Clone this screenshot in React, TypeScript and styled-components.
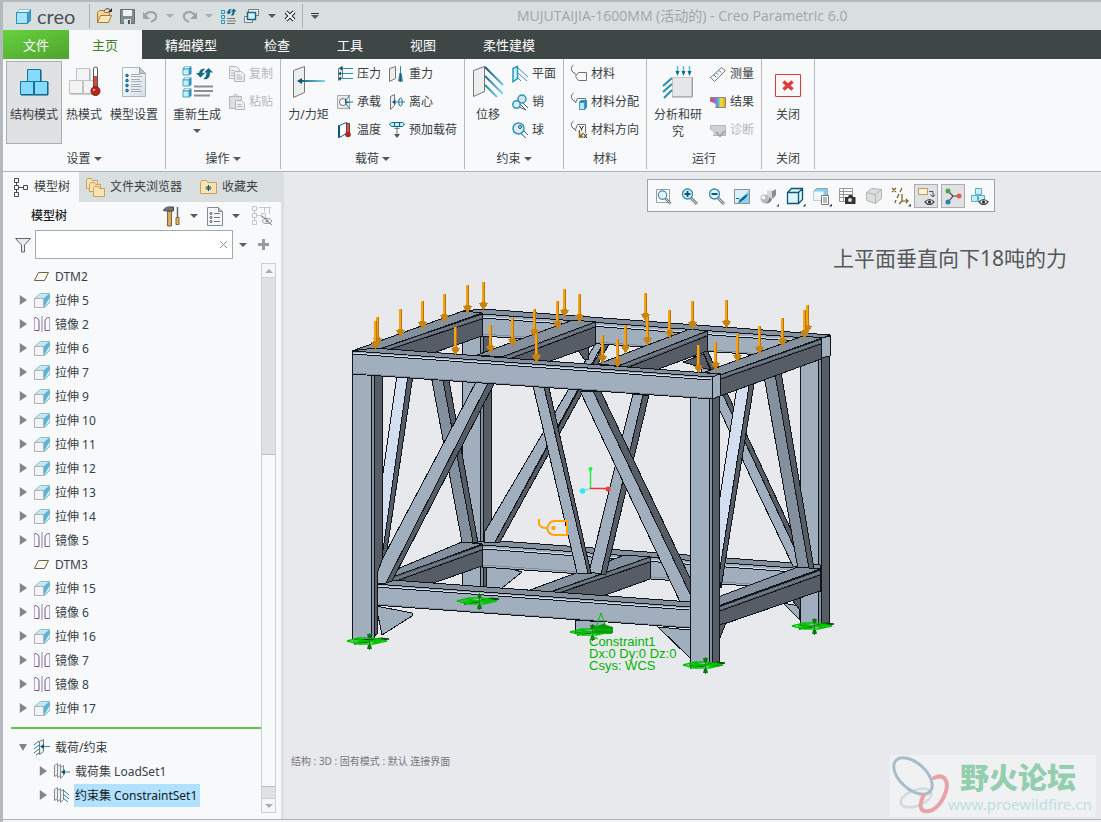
import React, { ReactNode } from 'react';
import styled, { createGlobalStyle, css } from 'styled-components';

const GlobalStyle = createGlobalStyle`
  *, *::before, *::after { box-sizing: border-box; }
  body {
    margin: 0;
    background: #e8e9ed;
    color: #3a3f44;
    font: 12px/16px 'Noto Sans', 'Noto Sans CJK SC', sans-serif;
  }
  button, input { font: inherit; color: inherit; }
  button { border: 0; padding: 0; background: none; cursor: pointer; }
  ul { list-style: none; margin: 0; padding: 0; }
`;

/* ---------- icon helpers ---------- */

const Svg = styled.svg`
  display: block;
  flex: none;
  overflow: visible;
`;

interface IconProps { w: number; h?: number; children: ReactNode }
const Icon = ({ w, h = w, children }: IconProps) => (
  <Svg width={w} height={h} viewBox={`0 0 ${w} ${h}`} fill="none" aria-hidden="true">{children}</Svg>
);

const Caret = styled.span<{ $pale?: boolean }>`
  flex: none;
  width: 0;
  height: 0;
  border: 4px solid transparent;
  border-top-color: ${(p) => (p.$pale ? '#a9afb1' : '#555a5e')};
  border-bottom-width: 0;
`;

const SmallCube = ({ x, y, s = 6 }: { x: number; y: number; s?: number }) => (
  <g strokeWidth="1">
    <path d={`M${x - .5} ${y + 1.5}l2 -2h${s + 1}v${s + 1}l-2 2z`} fill="#2b8fb8" />
    <path d={`M${x + .5} ${y + 1.5}l1.500 -1.500h${s - 1}l-1.500 1.500z`} fill="#e4f9ff" />
    <path d={`M${x} ${y + 2}h${s}v${s}h-${s}z`} fill="#c4effc" stroke="#4ba6c8" />
  </g>
);

const BlockStack = ({ fill, line, side }: { fill: string; line: string; side: string }) => (
  <g stroke={line} fill={fill}>
    <path d="M8.500 2.500h13v12h-13z" /><path d="M1.500 14.500h13v13h-13z" /><path d="M15.500 14.500h13v13h-13z" />
    <path d="M2 28h27v-13M22 3v11" stroke={side} fill="none" />
  </g>
);

const Sheet = ({ x = 0, y = 0 }: { x?: number; y?: number }) => (
  <g transform={`translate(${x} ${y})`}>
    <path d="M.5 2.500l4 -2v11l-4 3z" fill="#eceeef" stroke="#777" />
  </g>
);

const IcStructure = () => <Icon w={30}><BlockStack fill="#86dbfb" line="#12769c" side="#0b5a7a" /></Icon>;
const IcThermal = () => (
  <Icon w={32}>
    <BlockStack fill="#f3f3f3" line="#c2c2c2" side="#aaa" />
    <path d="M25.500 3a2 2 0 0 1 4 0v18h-4z" fill="#fff" stroke="#555" />
    <path d="M26 10h3v12h-3z" fill="#d84a3c" />
    <circle cx="27.500" cy="25" r="4.500" fill="#b3261c" stroke="#7d1c15" /><circle cx="26" cy="24" r="1.300" fill="#f08a80" />
  </Icon>
);
const IcModelSetup = () => (
  <Icon w={26} h={32}>
    <defs><linearGradient id="pg" x1="0" y1="0" x2="1" y2="1"><stop offset="0" stopColor="#fff" /><stop offset="1" stopColor="#d3dfe6" /></linearGradient></defs>
    <path d="M1.500 1.500h17l6 6v23h-23z" fill="url(#pg)" stroke="#adb6ba" /><path d="M18.500 1.500v6h6z" fill="#b9c8cf" stroke="#93a3aa" />
    {[9, 14, 19, 24].map((y) => <g key={y}><circle cx="6" cy={y + .5} r="1.300" fill="#2a9bc4" stroke="#0d5e80" /><path d={`M10 ${y - .5}h9M10 ${y + 1.500}h11`} stroke="#a9aeb1" /></g>)}
  </Icon>
);
const Swirl = ({ x, y, k = 1 }: { x: number; y: number; k?: number }) => (
  <g transform={`translate(${x} ${y}) scale(${k})`} fill="#14688a">
    <path d="M0 6l4.500 4.500l4.500 -4.500h-2.500c0 -2 1 -3 3 -4c-4 -1 -6 1 -6.500 4z" />
    <path d="M17 5.500l-4.500 -4.500l-4.500 4.500h2.500c0 3 -1 5 -3 6.500c4 1 6.500 -1 6.500 -6.500z" />
  </g>
);
const IcRegen = () => (
  <Icon w={32}>
    <SmallCube x={2} y={1} /><SmallCube x={2} y={12} /><SmallCube x={2} y={23} />
    <Swirl x={15} y={1} />
    <path d="M13 20.500h19M13 25h19M13 29.500h16" stroke="#8a8f92" strokeWidth="2" />
  </Icon>
);
const IcCopy = () => (
  <Icon w={16}><g stroke="#b4b8ba" fill="#eceeef">
    <path d="M.5 .5h7l3 3v9h-10z" /><path d="M5.500 5.500h7l3 3v7h-10z" /><path d="M2 4.500h3M2 7h3M2 9.500h3M7.500 9h4M7.500 11h6M7.500 13h6" />
  </g></Icon>
);
const IcPaste = () => (
  <Icon w={16}><g stroke="#b4b8ba" fill="#eceeef">
    <path d="M.5 2.500h12v12h-12z" fill="#dcdfe0" /><path d="M4 2.500l1.500 -2h2l1.500 2z" /><path d="M6.500 6.500h6l3 3v6h-9z" /><path d="M8.500 10.500h4M8.500 12.500h5" />
  </g></Icon>
);
const IcForce = () => (
  <Icon w={34} h={32}>
    <defs><linearGradient id="fg"><stop offset="0" stopColor="#0b5878" /><stop offset="1" stopColor="#7fd6fa" /></linearGradient></defs>
    <path d="M1.500 4.500l11 -4v26l-11 5z" fill="#eceded" stroke="#777" />
    <path d="M7 14h26v2h-26z" fill="url(#fg)" /><path d="M5 15l5 -3v6z" fill="#0b5878" />
  </Icon>
);
const IcPressure = () => (
  <Icon w={16}><Sheet x={1} /><path d="M5 2.500h11M3 7.500h13M5 12.500h11" stroke="#2b8fb8" /><path d="M2 2.500l3 -2v4zM1 7.500l3 -2v4zM1 12.500l3 -2v4z" fill="#0b5878" /></Icon>
);
const IcGravity = () => (
  <Icon w={16}><path d="M.5 2.500l6 -2v12l-6 3z" fill="#eceded" stroke="#777" /><path d="M11 0h1v16h-1z" fill="#2b8fb8" /><path d="M10.500 7h2l1.500 8.500h-5z" fill="#0b5878" opacity=".8" /></Icon>
);
const IcBearing = () => (
  <Icon w={16}><path d="M.5 1.500h12v13h-12z" fill="#e9eaeb" stroke="#a5a9ab" /><circle cx="6" cy="8" r="3.500" fill="#fff" stroke="#6d7275" /><path d="M8 7l5 -6M8 8h8M8 9l5 6" stroke="#1c7ba0" /><path d="M8.500 5v3.500h3" stroke="#0b5878" /></Icon>
);
const IcCentrifugal = () => (
  <Icon w={16}><path d="M1.500 2.500l4 -2v11l-4 4z" fill="#eceded" stroke="#777" /><path d="M4 8h12" stroke="#2b8fb8" /><path d="M3 8l3.500 -2.500v5z" fill="#0b5878" /><ellipse cx="11.500" cy="8" rx="1.800" ry="4" stroke="#14688a" /></Icon>
);
const IcTemperature = () => (
  <Icon w={16}><path d="M2.500 3.500l7 -3v11l-7 4z" fill="#fff" stroke="#0b5878" /><path d="M1.500 3v13" stroke="#0b5878" /><path d="M9.500 1.500h3v9h-3z" fill="#e2574a" stroke="#6b3b38" /><circle cx="11" cy="12.500" r="2.800" fill="#b3261c" /></Icon>
);
const IcPreload = () => (
  <Icon w={16}><path d="M2.500 .5h11l2 1.500l-2 2.500h-11l-2 -2.500z" fill="#c4ecfa" stroke="#0b6a8e" /><path d="M5.500 .5v4M10.500 .5v4" stroke="#0b6a8e" /><path d="M5.500 6.500h5M8 5v8" stroke="#777" /><path d="M8 16l-3 -4h6z" fill="#555" /></Icon>
);
const IcDisplacement = () => (
  <Icon w={32} h={34}>
    <defs><linearGradient id="dg" x1="0" y1="0" x2="1" y2="1"><stop offset="0" stopColor="#0b5878" /><stop offset="1" stopColor="#8adcff" /></linearGradient></defs>
    <path d="M1.500 5.500l11 -4v25l-11 5z" fill="#eceded" stroke="#777" />
    <path d="M13 2l18 18M13 11l18 18M13 20l12 12" stroke="url(#dg)" strokeWidth="2" />
  </Icon>
);
const IcPlane = () => (
  <Icon w={16}><path d="M1 2.500l4.500 -2v12l-4.500 3z" fill="#d6f2fc" stroke="#2598c4" strokeWidth="1.500" /><path d="M6 2l10 9M6 7l9 8M6 12l3 3" stroke="#3f93b8" /></Icon>
);
const IcPin = () => (
  <Icon w={16}><path d="M7 13l7 3M11 9l5 5M8 10l6 6" stroke="#5a6468" /><circle cx="10" cy="5" r="4" fill="#d9e3e7" stroke="#2598c4" strokeWidth="1.500" /><circle cx="4.500" cy="10.500" r="3.700" fill="#e4eaec" stroke="#2598c4" strokeWidth="1.500" /></Icon>
);
const IcBall = () => (
  <Icon w={16}><path d="M8 11l6 5M11 8l5 5" stroke="#2b6f90" /><circle cx="6.500" cy="6.500" r="5.500" fill="#e4eaec" stroke="#2598c4" strokeWidth="1.500" /><circle cx="8" cy="5" r="1.500" stroke="#0b5878" /></Icon>
);
const Hook = <path d="M2.500 -1c-2.500 2 -2.500 4 -1.500 6c1 2 3 1.500 4 4" stroke="#555a5c" />;
const IcMaterial = () => (
  <Icon w={16}>{Hook}<path d="M4.500 10.500l3 -4h8v8h-8z" fill="#fafafa" stroke="#6d7275" /></Icon>
);
const IcAssign = () => (
  <Icon w={16}>{Hook}<path d="M4.500 8.500l2 -4h8v3" stroke="#6d7275" /><path d="M8 8l2 -2h6v7l-2 3h-6z" fill="#2b8fb8" /><path d="M8.500 8.500h5v7h-5z" fill="#b5e9fb" stroke="#3a9cc2" /></Icon>
);
const IcOrient = () => (
  <Icon w={16}>{Hook}<path d="M4.500 7.500l2 -5h8v9" stroke="#6d7275" /><path d="M8.500 4l2 3l2 -3M10.500 7v1.500" stroke="#222" /><path d="M8.500 8v7h4M8.500 15l4 -4" stroke="#8a6420" strokeWidth="1.500" /><path d="M13 12l3 4M16 12l-3 4" stroke="#222" /></Icon>
);
const IcAnalysis = () => (
  <Icon w={30} h={32}>
    <path d="M9.500 11.500h19v19h-19z" fill="#e4e6e7" stroke="#c5c8ca" /><path d="M9 31h20.500v-20" stroke="#9a9ea1" />
    <path d="M14.500 0v6M20.500 0v6M26.500 0v6" stroke="#5bb8de" strokeWidth="1.500" />
    <path d="M14.500 10l-2 -5h4zM20.500 10l-2 -5h4zM26.500 10l-2 -5h4z" fill="#0b6a8e" />
    <path d="M0 20l9 -8M0 26l9 -8M1 32l8 -8" stroke="#2b8fb8" strokeWidth="2" />
  </Icon>
);
const IcMeasure = () => (
  <Icon w={16}><path d="M.5 11.500l11 -10l4 3l-11 11z" fill="#f3f4f4" stroke="#777c7f" /><path d="M4 9l2 2M6.500 7l1.500 1.500M9 4.500l2 2" stroke="#1c7ba0" /></Icon>
);
const IcResults = () => (
  <Icon w={16}>
    <defs><linearGradient id="rg"><stop offset="0" stopColor="#ef4136" /><stop offset=".3" stopColor="#b455e8" /><stop offset=".5" stopColor="#39b4f0" /><stop offset=".7" stopColor="#f7e32b" /><stop offset="1" stopColor="#f59a23" /></linearGradient></defs>
    <path d="M.5 3.500h15v10h-10c2 -3 0 -5 -5 -6z" fill="url(#rg)" stroke="#888" />
  </Icon>
);
const IcDiagnose = () => (
  <Icon w={16}><path d="M.5 3.500h15v10h-12c2 -3 0 -5 -3 -6z" fill="#cfd1d2" stroke="#b4b6b8" /><path d="M6 10l4 4l5 -5" stroke="#a4a7a9" strokeWidth="2" /></Icon>
);
const IcClose = () => (
  <Icon w={28} h={32}><path d="M1.500 8.500h25v22h-25z" fill="#fdf7f7" stroke="#d63a3a" /><path d="M9.500 15.500l9 8M18.500 15.500l-9 8" stroke="#dd3c3c" strokeWidth="3.500" /></Icon>
);

/* ---------- title bar ---------- */

const Shell = styled.div`
  min-height: 100vh;
  display: flex;
  flex-direction: column;
  border: solid #b3b9bc;
  border-width: 2px 0 0 3px;
`;
const TitleBar = styled.header`
  display: flex;
  align-items: center;
  height: 28px;
  padding-left: 13px;
  background: #d9dfdf;
`;
const Brand = styled.span`
  display: flex;
  align-items: center;
  gap: 6px;
  width: 73px;
  color: #4b5055;
  font: 20px/22px Lato, sans-serif;
`;
const QuickBar = styled.div`
  display: flex;
  align-items: center;
  height: 24px;
  border: solid #aeb5b7;
  border-width: 0 1px;
  width: 214px;
  justify-content: space-between;
  padding: 0 6px;
`;
const QuickMore = styled.button`
  display: flex;
  flex-direction: column;
  align-items: center;
  gap: 1px;
  margin-left: 8px;
  &::before { content: ''; width: 8px; height: 1px; background: #333; }
`;
const DocTitle = styled.span`
  margin-left: 198px;
  font-family: 'Open Sans', 'Noto Sans CJK SC', sans-serif;
  font-size: 14px;
  color: #a0a6a8;
  white-space: nowrap;
`;
const Flat = styled.button`
  display: flex;
  align-items: center;
  justify-content: center;
`;

/* ---------- ribbon ---------- */

const TabBar = styled.nav`
  display: flex;
  height: 29px;
  background: #3e4646;
`;
const Tab = styled.button<{ $kind?: 'file' | 'active' }>`
  padding: 0 24px 0 23px;
  font-size: 13px;
  color: #fff;
  white-space: nowrap;
  ${(p) => p.$kind === 'file' && css`padding: 0 20px; background: linear-gradient(160deg, #67d13e, #4ea32f);`}
  ${(p) => p.$kind === 'active' && css`background: #f7f9fb; color: #3f8420;`}
`;
const Ribbon = styled.div`
  display: flex;
  height: 113px;
  background: #f7f9fb;
  border-bottom: 1px solid #a9b4b8;
`;
const Group = styled.section`
  display: flex;
  flex-direction: column;
  justify-content: space-between;
  margin-bottom: 2px;
  border-right: 1px solid #b3b9bc;
`;
const GroupBody = styled.div<{ $wide?: boolean }>`
  display: flex;
  padding: 1px ${(p) => (p.$wide ? 7 : 3)}px 0 3px;
`;
const GroupLabel = styled.div`
  display: flex;
  align-items: center;
  justify-content: center;
  gap: 3px;
  height: 20px;
`;
const Big = styled.button<{ $w: number; $on?: boolean }>`
  display: flex;
  flex-direction: column;
  align-items: center;
  width: ${(p) => p.$w}px;
  height: 83px;
  margin-top: 1px;
  padding-top: 4px;
  line-height: 17px;
  border: 1px solid ${(p) => (p.$on ? '#a9adb0' : 'transparent')};
  background: ${(p) => (p.$on ? '#dfe1e3' : 'none')};
`;
const BigArt = styled.span`
  display: flex;
  align-items: center;
  height: 32px;
  margin-bottom: 8px;
`;
const BigText = styled.span`
  min-width: 48px;
  margin-bottom: 6px;
`;
const Small = styled.button<{ $off?: boolean }>`
  display: flex;
  align-items: center;
  gap: 4px;
  height: 28px;
  white-space: nowrap;
  color: ${(p) => (p.$off ? '#b4b8bb' : 'inherit')};
`;
const Cols = styled.div`
  display: flex;
  gap: 8px;
  padding-left: 4px;
`;

const BigButton = ({ w, on, icon, label, caret }: { w: number; on?: boolean; icon: ReactNode; label: string; caret?: boolean }) => (
  <Big $w={w} $on={on}><BigArt>{icon}</BigArt><BigText>{label}</BigText>{caret && <Caret />}</Big>
);
const SmallButton = ({ icon, label, off }: { icon: ReactNode; label: string; off?: boolean }) => (
  <Small $off={off} disabled={off}>{icon}{label}</Small>
);
const RibbonGroup = ({ label, caret, wide, children }: { label: string; caret?: boolean; wide?: boolean; children: ReactNode }) => (
  <Group><GroupBody $wide={wide}>{children}</GroupBody><GroupLabel>{label}{caret && <Caret />}</GroupLabel></Group>
);

/* ---------- model tree panel ---------- */

const Main = styled.main`
  display: flex;
  flex: 1;
`;
const Panel = styled.aside`
  display: flex;
  flex-direction: column;
  width: 281px;
  flex: none;
  background: #f7f9fb;
  border-right: 3px solid #d9dfe2;
`;
const PanelTabs = styled.div`
  display: flex;
  height: 30px;
  background: #d9dfdf;
`;
const PanelTab = styled.button<{ $on?: boolean }>`
  display: flex;
  align-items: center;
  gap: 5px;
  padding: ${(p) => (p.$on ? '0 9px 0 10px' : '0 11px 0 7px')};
  white-space: nowrap;
  background: ${(p) => (p.$on ? '#f7f9fb' : 'none')};
`;
const PanelHead = styled.div`
  display: flex;
  align-items: center;
  height: 28px;
  padding: 0 8px 0 28px;
`;
const PanelTitle = styled.span`
  flex: 1;
  font-weight: 500;
  color: #222;
`;
const HeadTools = styled.div`
  display: flex;
  align-items: center;
  gap: 9px;
`;
const SearchRow = styled.div`
  display: flex;
  align-items: center;
  height: 29px;
  padding: 0 12px;
  gap: 4px;
`;
const SearchBox = styled.label`
  display: flex;
  align-items: center;
  flex: 1;
  height: 29px;
  padding: 0 4px;
  background: #fff;
  border: 1px solid #9fabae;
  margin-right: 2px;
`;
const SearchInput = styled.input`
  flex: 1;
  min-width: 0;
  border: 0;
  outline: 0;
  background: none;
`;
const SearchEnd = styled.div`
  display: flex;
  align-items: center;
  gap: 11px;
`;
const TreeArea = styled.div`
  display: flex;
  flex: 1;
  padding: 4px 5px 6px 8px;
`;
const TreeList = styled.div`
  flex: 1;
  padding-top: 1px;
`;
const Row = styled.li<{ $depth?: number }>`
  display: flex;
  align-items: center;
  height: 24px;
  padding-left: ${(p) => 8 + 20 * (p.$depth || 0)}px;
`;
const Twisty = styled.span<{ $state?: 'open' | 'closed' }>`
  width: 8px;
  height: 10px;
  margin-right: 7px;
  clip-path: ${(p) => (p.$state === 'open' ? 'polygon(0 20%, 100% 20%, 50% 90%)' : 'polygon(10% 0, 100% 50%, 10% 100%)')};
  background: ${(p) => (p.$state ? '#82868a' : 'none')};
`;
const RowName = styled.span<{ $picked?: boolean }>`
  margin-left: 4px;
  padding: 3px 3px 3px 1px;
  line-height: 17px;
  white-space: nowrap;
  word-break: keep-all;
  color: ${(p) => (p.$picked ? '#15191c' : 'inherit')};
  background: ${(p) => (p.$picked ? '#b0e1fe' : 'none')};
`;
const InsertLine = styled.div`
  height: 2px;
  margin: 7px 0 6px;
  background: #62c445;
`;
const Scroll = styled.div`
  display: flex;
  flex-direction: column;
  width: 15px;
  background: #dfe1e3;
  border: 1px solid #cdd0d2;
`;
const ScrollButton = styled.button<{ $down?: boolean }>`
  display: flex;
  align-items: center;
  justify-content: center;
  height: 14px;
  background: #f5f6f7;
  border: solid #cdd0d2;
  border-width: ${(p) => (p.$down ? '1px 0 0' : '0 0 1px')};
  ${Caret} { transform: ${(p) => (p.$down ? 'none' : 'rotate(180deg)')}; }
`;
const ScrollGap = styled.div<{ $grow: number }>`
  flex: ${(p) => p.$grow} 1 0;
`;
const Thumb = styled.div`
  flex: 332 1 0;
  background: #f7f9fb;
  border: solid #b9bdc0;
  border-width: 1px 0;
`;

const IcExtrude = () => (
  <Icon w={16}><path d="M.5 6.500l6 -5h9v9l-5 5h-10z" fill="#bfe9f7" stroke="#8fb9c9" /><path d="M10 6l5.500 -4.500v9l-5.500 5z" fill="#5fb3d1" /><path d="M10 15l5.500 -5v-4z" fill="#d5f1fa" /><path d="M.5 6.500h9v9h-9z" fill="#f3f3f3" stroke="#b0b3b5" /></Icon>
);
const IcMirror = () => (
  <Icon w={16}><path d="M.5 1v13.500M15.500 1v13.500" stroke="#b9a9cf" /><path d="M1 1.500c2.500 0 4 2 4 4v9h-4.500M15 1.500c-2.500 0 -4 2 -4 4v9h4.500" stroke="#7a4fa0" /><path d="M8 0v16" stroke="#888" /></Icon>
);
const IcDatum = () => <Icon w={16}><path d="M4.500 4.500h10l-4 8h-10z" stroke="#7a6128" /></Icon>;
const IcLoads = () => (
  <Icon w={16}><path d="M5.500 2.500l4 -2v12l-4 3z" fill="#eceded" stroke="#777" /><path d="M0 6l5 -4M0 10l5 -4M0 14l5 -4M2 16l3 -2" stroke="#1c7ba0" /><path d="M7 7.500h9" stroke="#2b8fb8" /><path d="M6 7.500l4 -2.500v5z" fill="#0b5878" /></Icon>
);
const IcSet = ({ cons }: { cons?: boolean }) => (
  <Icon w={16}>
    <g fill="#f0f0f0" stroke="#8a8d8f"><path d="M.5 2.500l3 -2v11l-3 2z" /><path d="M3.500 3.500l3 -2v11l-3 2z" /><path d="M6.500 4.500l3 -2v10l-3 3z" /></g>
    {cons ? <path d="M9 3l6 5M9 7l6 5M9 11l5 4" stroke="#1c7ba0" /> : <><path d="M8 9h8" stroke="#2b8fb8" /><path d="M7 9l4 -2.500v5z" fill="#0b5878" /></>}
  </Icon>
);

type Kind = 'datum' | 'extrude' | 'mirror';
const FEATURES: [Kind, string][] = [
  ['datum', 'DTM2'], ['extrude', '拉伸 5'], ['mirror', '镜像 2'], ['extrude', '拉伸 6'], ['extrude', '拉伸 7'],
  ['extrude', '拉伸 9'], ['extrude', '拉伸 10'], ['extrude', '拉伸 11'], ['extrude', '拉伸 12'], ['extrude', '拉伸 13'],
  ['extrude', '拉伸 14'], ['mirror', '镜像 5'], ['datum', 'DTM3'], ['extrude', '拉伸 15'], ['mirror', '镜像 6'],
  ['extrude', '拉伸 16'], ['mirror', '镜像 7'], ['mirror', '镜像 8'], ['extrude', '拉伸 17'],
];
const FEATURE_ICON: Record<Kind, ReactNode> = { datum: <IcDatum />, extrude: <IcExtrude />, mirror: <IcMirror /> };

const TreePanel = () => (
  <Panel>
    <PanelTabs>
      <PanelTab $on>
        <Icon w={16} h={20}><g stroke="#444a4e"><path d="M1.500 1.500h4v4h-4zM1.500 8.500h4v4h-4zM1.500 15.500h4v4h-4zM10.500 8.500h4v4h-4zM3.500 5.500v3M3.500 12.500v3M5.500 10.500h5" /></g></Icon>
        模型树
      </PanelTab>
      <PanelTab>
        <Icon w={19}><g fill="#fbe3b4" stroke="#c9a060"><path d="M.5 2.500l1 -2h4l1 2h5v8h-11z" /><path d="M3.500 6.500l1 -2h4l1 2h5v7h-11z" /><path d="M7.500 10.500l1 -2h4l1 2h5v8h-11z" /></g></Icon>
        文件夹浏览器
      </PanelTab>
      <PanelTab>
        <Icon w={17} h={16}><path d="M.5 3.500l1 -2h5l1 2h9v11h-16z" fill="#fbe3b4" stroke="#c9a060" /><path d="M8.500 6v6M5.500 9h6M6.500 7l4 4M10.500 7l-4 4" stroke="#0b5878" /></Icon>
        收藏夹
      </PanelTab>
    </PanelTabs>
    <PanelHead>
      <PanelTitle>模型树</PanelTitle>
      <HeadTools>
        <Flat aria-label="设置"><Icon w={18} h={20}><path d="M4.500 5h4v15h-4z" fill="#d9a766" stroke="#8a6433" /><path d="M.5 4.500c1 -3 4 -4 10 -3.500v4h-7z" fill="#6f7477" stroke="#44484a" /><path d="M14.500 1v10" stroke="#666" strokeWidth="1.500" /><path d="M13 11.500h3v7h-3z" fill="#e8b364" stroke="#8a6433" /></Icon></Flat>
        <Caret />
        <Flat aria-label="显示"><Icon w={16} h={19}><path d="M.5 .5h11l4 4v14h-15z" fill="#f2f6f8" stroke="#848b8f" /><path d="M11.500 .5v4h4" fill="#b5c2c8" stroke="#848b8f" />{[6, 10, 14].map((y) => <g key={y}><circle cx="4" cy={y + .5} r="1" stroke="#555" /><path d={`M7 ${y + .5}h6`} stroke="#777" /></g>)}</Icon></Flat>
        <Caret />
        <Flat aria-label="隐藏" disabled><Icon w={24} h={20}><g transform="translate(3 0)"><g stroke="#c3c7c9"><path d="M.5 .5h4v4h-4zM.5 7.500h4v4h-4zM.5 14.500h4v4h-4zM9.500 7.500h4v4h-4zM2.500 4.500v3M2.500 11.500v3M4.500 9.500h5M7 1.500h12M17.500 2v6M12.500 2v4" /></g><ellipse cx="15" cy="15" rx="4.500" ry="2.500" stroke="#999" /><circle cx="15" cy="15" r="1.500" fill="#999" /><path d="M10 10l10 9" stroke="#777" /></g></Icon></Flat>
      </HeadTools>
    </PanelHead>
    <SearchRow>
      <Icon w={16}><path d="M.5 1.500h15l-6 6.500v7h-3v-7z" fill="#e8eaeb" stroke="#63686b" /></Icon>
      <SearchBox>
        <SearchInput aria-label="搜索" />
        <Flat aria-label="清除"><Icon w={9}><path d="M1 1l7 7M8 1l-7 7" stroke="#8d9295" /></Icon></Flat>
      </SearchBox>
      <SearchEnd><Caret /><Flat aria-label="添加"><Icon w={11}><path d="M5.500 0v11M0 5.500h11" stroke="#999c9f" strokeWidth="3" /></Icon></Flat></SearchEnd>
    </SearchRow>
    <TreeArea>
      <TreeList>
        <ul>
          {FEATURES.map(([kind, name]) => (
            <Row key={name}><Twisty $state={kind === 'datum' ? undefined : 'closed'} />{FEATURE_ICON[kind]}<RowName>{name}</RowName></Row>
          ))}
        </ul>
        <InsertLine />
        <ul>
          <Row><Twisty $state="open" /><IcLoads /><RowName>载荷/约束</RowName></Row>
          <Row $depth={1}><Twisty $state="closed" /><IcSet /><RowName>载荷集 LoadSet1</RowName></Row>
          <Row $depth={1}><Twisty $state="closed" /><IcSet cons /><RowName $picked>约束集 ConstraintSet1</RowName></Row>
        </ul>
      </TreeList>
      <Scroll>
        <ScrollButton aria-label="向上"><Caret $pale /></ScrollButton>
        <ScrollGap $grow={176} /><Thumb /><ScrollGap $grow={11} />
        <ScrollButton $down aria-label="向下"><Caret $pale /></ScrollButton>
      </Scroll>
    </TreeArea>
  </Panel>
);

/* ---------- graphics area ---------- */

const Canvas = styled.section`
  position: relative;
  flex: 1;
  min-width: 0;
  overflow: hidden;
  background: #e8e9ed;
`;
const ViewBar = styled.div`
  position: absolute;
  top: 7px;
  left: 363px;
  display: flex;
  align-items: center;
  justify-content: space-between;
  width: 348px;
  height: 33px;
  padding: 0 3px;
  background: #f7f9fb;
  border: 1px solid #9da2a5;
`;
const ViewButton = styled.button<{ $on?: boolean; $more?: boolean }>`
  position: relative;
  display: flex;
  align-items: center;
  justify-content: center;
  width: 24px;
  height: 24px;
  border: 1px solid ${(p) => (p.$on ? '#a9adb0' : 'transparent')};
  background: ${(p) => (p.$on ? '#dfe1e3' : 'none')};
  ${(p) => p.$more && css`
    &::after {
      content: '';
      position: absolute;
      right: 0;
      bottom: 0;
      width: 3px;
      height: 3px;
      background: #444;
      clip-path: polygon(100% 0, 100% 100%, 0 100%);
    }
  `}
`;
const Model = styled.svg`
  position: absolute;
  left: 56px;
  top: 98px;
  width: 500px;
  height: 420px;
`;
const Note = styled.p`
  position: absolute;
  top: 70px;
  right: 34px;
  margin: 0;
  font-size: 21px;
  line-height: 32px;
  color: #55585b;
`;
const Status = styled.p`
  position: absolute;
  left: 7px;
  bottom: 50px;
  margin: 0;
  font-size: 10px;
  color: #74787b;
`;
const Watermark = styled.div`
  position: absolute;
  right: 5px;
  bottom: 2px;
  display: flex;
  align-items: center;
  gap: 2px;
  width: 206px;
  height: 62px;
  background: #eff1f3;
`;
const MarkText = styled.div`
  display: flex;
  flex-direction: column;
  font-size: 15px;
  line-height: 20px;
  color: #c0dfe0;
`;
const MarkName = styled.strong`
  padding-left: 12px;
  font: 900 29px/36px 'Noto Sans CJK SC', sans-serif;
  color: #93cfae;
  white-space: nowrap;
`;

const LIGHT = '#a1aebd';
const MID = '#84909e';
const DARK = '#575d66';
const SKY = '#d3dff0';
const SHINE = '#cfdcec';
const ROUND = '#6f7a87';
const EDGE = '#111418';

/* Faces of the frame, painted from the far side to the near side; an entry of two points is a line along a tube. */
const FACES: [string, string][] = [
  // far posts
  [LIGHT, '462,330 481,330 481,592 462,592'], [MID, '480,330 483,330 483,588 480,588'], [DARK, '483,330 491,330 491,588 483,588'],
  [LIGHT, '783,603 799,606 799,619'], [DARK, '792,600 801,597 811,621 811,624'],
  [LIGHT, '800,350 819,350 819,625 800,625'], [MID, '818,350 821,350 821,625 818,625'], [DARK, '821,350 829,350 829,623 821,623'],
  // far bottom beam
  [LIGHT, '486,562 522,572 502,588 486,588'],
  [MID, '462,541 500,541 820,565 820,571 482,546'], [LIGHT, '482,545 820,570 820,591 482,567'],
  [SHINE, '483,548 820,573'], [EDGE, '483,549 820,574'], [MID, '483,565 820,589'],
  // far diagonals
  [LIGHT, '600,336 607,336 495,542 484,542 484,533'], [DARK, '604,344 609,344 500,542 495,542'],
  [LIGHT, '692,350 702,350 803,566 793,566 752,480'], [DARK, '702,350 707,350 808,566 803,566'],
  [DARK, '575,346 588,343 588,359 584,359'], [DARK, '683,362 704,354 710,370'],
  // far top beam
  [MID, '463,311 483,309 830,335 820,339 482,314'], [LIGHT, '482,314 820,339 820,359 482,336'],
  [SHINE, '482,317 820,342'], [EDGE, '482,318 820,343'], [MID, '482,334 820,358'],
  // left side diagonals
  [MID, '431,375 442,375 473,542 462,542'], [DARK, '442,375 448,375 478,543 473,542'],
  [SKY, '397,375 408,375 382,557 371,557'], [DARK, '408,375 413,375 386,557 382,557'],
  // bottom left beam
  [MID, '385,574 462,542 482,544 384,581'], [DARK, '384,580 482,545 482,566 425,586'],
  [ROUND, '388,581 482,547'], [ROUND, '388,582 482,548'], [EDGE, '388,584 482,550'],
  // bottom middle beam
  [MID, '530,590 625,555 650,557 550,593'], [DARK, '547,593 650,557 650,579 600,597'],
  [ROUND, '552,593 650,559'], [ROUND, '554,593 650,560'], [EDGE, '556,594 650,562'],
  // top left beam
  [MID, '352,351 463,311 482,313 378,350'], [DARK, '376,350 482,314 482,336 430,354'],
  [ROUND, '380,350 482,316'], [ROUND, '380,351 482,317'], [EDGE, '382,352 482,319'],
  // top cross beams
  [MID, '477,355 573,320 595,322 503,357'], [DARK, '499,358 595,322 595,345 545,363'],
  [ROUND, '502,359 595,324'], [ROUND, '502,360 595,325'], [EDGE, '504,361 595,327'],
  [MID, '598,364 690,329 707,331 620,366'], [DARK, '618,366 707,331 707,351 656,370'],
  [ROUND, '622,366 707,333'], [ROUND, '622,367 707,334'], [EDGE, '624,369 707,336'],
  // right side diagonals
  [MID, '764,376 775,374 810,569 798,569'], [DARK, '775,374 781,372 814,569 809,569'],
  [SKY, '738,380 750,380 721,562 710,562'], [DARK, '750,380 755,378 721,588 719,575'],
  // right top and bottom beams
  [MID, '705,372 803,336 822,338 720,375'], [DARK, '720,375 821,339 821,359 720,396'],
  [ROUND, '721,376 821,341'], [ROUND, '721,377 821,342'], [EDGE, '721,379 821,344'],
  [LIGHT, '821,338 830,336 830,356 821,358'],
  [MID, '718,597 798,567 820,569 718,606'], [DARK, '718,607 820,570 820,591 718,626'],
  [ROUND, '720,608 820,572'], [ROUND, '720,609 820,573'], [EDGE, '720,611 820,575'],
  // gussets and the centre foot
  [LIGHT, '376,606 412,613 412,616 382,635'], [LIGHT, '658,627 690,630 690,658'], [DARK, '718,625 726,623 719,640'],
  [LIGHT, '575,620 604,622 604,632 575,632'],
  // near diagonals
  [LIGHT, '633,394 643,395 601,574 589,572'], [DARK, '643,395 649,395 606,574 601,574'],
  [LIGHT, '580,391 593,391 690,593 690,606 682,606'], [DARK, '593,391 601,392 690,578 690,594'],
  [LIGHT, '533,386 544,387 588,573 577,573'], [DARK, '544,387 549,388 591,573 588,573'],
  // near bottom beam
  [MID, '380,580 392,580 690,602 690,607 374,585'], [LIGHT, '374,584 690,607 690,628 374,605'],
  [SHINE, '375,586 689,609'], [EDGE, '375,587 689,610'], [MID, '375,604 689,627'],
  [LIGHT, '476,382 488,383 386,583 375,583 375,573'], [DARK, '488,383 494,384 392,581 386,583'],
  // near posts
  [DARK, '374,374 382,374 382,560 377,574 377,634 374,636'],
  [LIGHT, '352,374 372,374 372,639 352,639'], [MID, '371,374 374,374 374,639 371,639'],
  [LIGHT, '690,396 710,396 710,665 690,665'], [MID, '709,396 713,396 713,665 709,665'], [DARK, '712,396 719,394 719,665 712,665'],
  // near top beam
  [MID, '352,351 374,348 720,374 712,378'], [LIGHT, '352,351 712,377 712,399 352,374'], [LIGHT, '712,377 720,374 720,396 712,399'],
  [SHINE, '353,353 711,379'], [EDGE, '353,354 711,380'], [MID, '353,373 711,398'],
];

const ARROWS: [number, number][] = [
  [377, 345], [375, 349], [400, 337], [422, 329], [444, 322], [467, 313], [483, 310], [455, 355], [490, 353], [512, 346],
  [534, 337], [536, 362], [557, 329], [564, 317], [579, 322], [645, 321], [647, 345], [602, 363], [617, 367], [625, 353],
  [669, 338], [692, 329], [726, 328], [698, 373], [715, 370], [737, 362], [759, 354], [782, 346], [807, 333], [804, 338],
];
const FEET: [number, number][] = [[367, 641], [477, 601], [590, 632], [703, 665], [812, 626]];

const FrameModel = () => (
  <Model viewBox="340 270 500 420" role="img" aria-label="模型">
    <g shapeRendering="crispEdges">
      {FACES.map(([fill, points], i) => (
        <polygon key={i} fill={fill} points={points} stroke={points.split(' ').length === 2 ? fill : EDGE} />
      ))}
    </g>
    {ARROWS.map(([x, y]) => (
      <g key={`${x}-${y}`} shapeRendering="crispEdges">
        <path d={`M${x - 1} ${y - 28}h2v21h-2z`} fill="#f7a113" /><path d={`M${x + 1} ${y - 28}h1v21h-1z`} fill="#b87508" />
        <path d={`M${x - 4} ${y - 7}l4 -1l5 1l-4.500 8z`} fill="#c98410" />
      </g>
    ))}
    {FEET.map(([x, y]) => (
      <g key={x} stroke="#00c400" fill="none">
        <path d={`M${x - 12} ${y + 3}l34 -5l-8 -1l-27 6z`} fill="#0c5c12" stroke="#063b0a" />
        <path d={`M${x - 20} ${y}l12 -3h12l16 3l-14 3h-14zM${x - 12} ${y + 2}l26 -4M${x - 10} ${y - 2}l22 4M${x - 14} ${y}h28`} strokeWidth="1.300" />
        <path d={`M${x + 2.5} ${y - 8}v17`} stroke="#0a8a10" />
        <path d={`M${x} ${y - 7}h5l-1 4h-3zM${x} ${y + 8}h5l-1 -4h-3z`} fill="#0a7a10" stroke="none" />
      </g>
    ))}
    <path d="M596 627l5 -14l5 14" stroke="#00c400" fill="none" />
    <path d="M593 627l10 -3l10 3v6h-18z" fill="#0a9a10" /><path d="M590 629.500h22M592 633.500h20" stroke="#00c400" />
    <g fontFamily="'Liberation Sans', sans-serif" fontSize="13" fill="#00b400">
      <text x="589" y="646">Constraint1</text><text x="589" y="658">Dx:0 Dy:0 Dz:0</text><text x="589" y="670">Csys: WCS</text>
    </g>
    <path d="M590.500 470v18" stroke="#2bec3c" strokeWidth="1.500" /><circle cx="590.500" cy="469" r="2" fill="#1df53a" />
    <path d="M590 488.500h17" stroke="#f03030" strokeWidth="1.500" /><circle cx="608" cy="489" r="2.500" fill="#f23a3a" />
    <path d="M590 488.500l-6 2" stroke="#35e9f5" /><circle cx="582.500" cy="491" r="2.800" fill="#2ceaf8" />
    <g stroke="#ffa30f" strokeWidth="2" fill="none"><path d="M539 519v5q1 4 8 4l2 -4q2 -3 5 -3h13v14h-13q-6 -1 -7 -7" /><circle cx="553.500" cy="528" r="1.200" /></g>
  </Model>
);

const Lens = ({ sign }: { sign?: string }) => (
  <><path d="M10 10l6 6" stroke="#7c8083" strokeWidth="3" /><path d="M10 10l6 6" stroke="#d5d7d9" /><circle cx="6.500" cy="6" r="5" fill="#e6f6fc" stroke="#2b8fb8" strokeWidth="1.300" />{sign && <path d={sign} stroke="#0b5878" strokeWidth="2" />}</>
);
const Eye = ({ x, y }: { x: number; y: number }) => (
  <g transform={`translate(${x} ${y})`}><path d="M0 3q4.500 -5 9 0q-4.500 5 -9 0z" fill="#fff" stroke="#444" strokeWidth="1.200" /><circle cx="4.500" cy="3" r="1.700" fill="#333" /></g>
);

const VIEW_TOOLS: { name: string; on?: boolean; more?: boolean; art: ReactNode }[] = [
  { name: '重新调整', art: <><path d="M1.500 1.500h13v13h-13z" fill="#fff" stroke="#999da0" /><g transform="translate(2 2) scale(.85)"><Lens /></g></> },
  { name: '放大', art: <Lens sign="M6.500 3v6M3.500 6h6" /> },
  { name: '缩小', art: <Lens sign="M3.500 6h6" /> },
  { name: '重画', art: <><path d="M.5 1.500h15v14h-15z" fill="#d6f1fb" stroke="#8a9093" /><path d="M15 2v13h-10c0 -3 4 -6 10 -13z" fill="#8fd3ee" /><path d="M4 15c1 -3 5 -7 10 -9c-1 3 -5 7 -10 9z" fill="#14688a" /><path d="M2 10.500h3l1 1" stroke="#14688a" /></> },
  { name: '渲染', more: true, art: <><path d="M7 2h8v8h-8z" fill="#d5d7d8" /><path d="M12 1h4v6l-4 4z" fill="#8a8d8f" /><path d="M8 1h8l-3 2h-6z" fill="#eee" /><circle cx="4.500" cy="10.500" r="4" fill="#b9bbbd" /><circle cx="3.500" cy="9.500" r="1.800" fill="#fff" /><path d="M2 14c6 2 7 -2 7 -5l3 2c-1 4 -5 6 -10 3z" fill="#7d8082" /></> },
  { name: '显示样式', more: true, art: <path d="M.5 4.500l4 -4h11v11l-4 4h-11zM.5 4.500h11v11M11.500 4.500l4 -4" fill="#dff4fb" stroke="#0b5878" strokeWidth="1.300" /> },
  { name: '已保存方向', more: true, art: <><path d="M.5 3.500l3 -3h11v9l-3 3h-11z" fill="#7fd0f0" stroke="#9aa5aa" /><path d="M.5 3.500h10v9h-10z" fill="#eef8fc" /><path d="M8.500 7.500h7v9h-7z" fill="#fff" stroke="#777" /><path d="M10 10h4M10 12h4M10 14h4" stroke="#777" /></> },
  { name: '视图管理器', art: <><path d="M.5 .5h13v13h-13zM.5 3.500h13M.5 6.500h13M.5 9.500h13M4.500 .5v13" fill="#fff" stroke="#999" /><path d="M6 9h3l1 -2h3l1 2h2.500v7h-10.500z" fill="#333" /><circle cx="11" cy="12" r="2" fill="#ddd" /></> },
  { name: '透视图', art: <path d="M.5 4.500l5 -4l10 1v9l-6 5l-9 -3zM.5 4.500l9 2v9M9.500 6.500l6 -5" fill="#dcdddd" stroke="#b3b5b6" /> },
  { name: '基准显示', more: true, art: <g stroke="#7a5a18" strokeWidth="1.200"><path d="M0 0l4 4M4 0l-4 4M10 0l-2 4M7 6l-2 4M4 12l-1 3M10 6v7M10 13h5M10 13l-3 3M14 11l2 2l-2 2" /></g> },
  { name: '注释显示', on: true, art: <><path d="M.5 .5h9v6h-9z" fill="#fdf3d8" stroke="#b99a5c" /><path d="M11 3.500h4v5M12.500 6.500l2.500 2.500l2 -2.500" stroke="#555" /><Eye x={7} y={11} /></> },
  { name: '旋转中心', on: true, art: <><path d="M3 3l5 5l-4 5M8 8h6" stroke="#444" strokeWidth="1.200" /><circle cx="3" cy="3" r="2.500" fill="#4ba348" /><circle cx="3" cy="14" r="2.500" fill="#2f7fae" /><circle cx="14" cy="8" r="2.500" fill="#e25a5a" /></> },
  { name: '模拟显示', art: <><g fill="#c4effc" stroke="#5aaecb"><path d="M4.500 .5h6v6h-6zM.5 7.500h6v6h-6zM7.500 7.500h6v6h-6z" /></g><Eye x={8} y={11} /></> },
];

const Footer = styled.footer`
  height: 3px;
  background: #f3f5f7;
  border-top: 1px solid #a9b4b8;
`;

export default function App() {
  return (
    <Shell>
      <GlobalStyle />
      <TitleBar>
        <Brand>
          <Icon w={15}><path d="M.5 3.500l3 -3h11v11l-3 3h-11z" fill="#3aa3cc" stroke="#2b8fb8" /><path d="M.5 3.500l3 -3h11l-3 3z" fill="#e0f7fe" /><path d="M.5 3.500h11v11h-11z" fill="#a5e4fb" stroke="#2b8fb8" /></Icon>
          creo
        </Brand>
        <QuickBar>
          <Flat aria-label="打开"><Icon w={16}><path d="M1.500 14.500v-10l2 -2h4l1 2h5v3" fill="#f6d79a" stroke="#a87a2d" /><path d="M1.500 14.500l3 -7h11l-3 7z" fill="#fbe6bb" stroke="#a87a2d" /><path d="M8 3c2 -3 4 -3 6 -1" stroke="#333" /><path d="M16 0v4h-4z" fill="#333" /></Icon></Flat>
          <Flat aria-label="保存"><Icon w={15}><path d="M.5 .5h14v14h-14z" fill="#858b8f" stroke="#666c70" /><path d="M3 1h9v6h-9z" fill="#eef1f2" /><path d="M4 10h7v5h-7z" fill="#cfe6ef" /><path d="M8 11h2v4h-2z" fill="#555" /></Icon></Flat>
          <Flat aria-label="撤消"><Icon w={15}><path d="M2 6c5 -6 12 -2 11 2c0 3 -3 4 -5 5" stroke="#9da3a5" strokeWidth="2" /><path d="M0 3v7h7z" fill="#9da3a5" /></Icon></Flat>
          <Caret $pale />
          <Flat aria-label="重做"><Icon w={15}><path d="M13 6c-5 -6 -12 -2 -11 2c0 3 3 4 5 5" stroke="#9da3a5" strokeWidth="2" /><path d="M15 3v7h-7z" fill="#9da3a5" /></Icon></Flat>
          <Caret $pale />
          <Flat aria-label="重新生成"><Icon w={15}><g fill="#c4effc" stroke="#2b8fb8"><path d="M.5 1.500h3v3h-3zM.5 6.500h3v3h-3zM.5 11.500h3v3h-3z" /></g><Swirl x={5} y={-1} k={.62} /><path d="M6 9.500h8M6 12h9M6 14.500h8" stroke="#777" /></Icon></Flat>
          <Flat aria-label="窗口"><Icon w={16}><g fill="#eef1f2" stroke="#777c7f"><path d="M4.500 1.500h10v6h-10z" /><path d="M.5 8.500h8v6h-8z" /></g><path d="M3.500 4.500h8v7h-8z" fill="#d8f2fb" stroke="#14688a" strokeWidth="1.500" /></Icon></Flat>
          <Caret />
          <Flat aria-label="关闭窗口"><Icon w={12}><path d="M2 2l8 8M10 2l-8 8" stroke="#222" strokeWidth="4" /><path d="M2 2l8 8M10 2l-8 8" stroke="#fff" strokeWidth="2" /></Icon></Flat>
        </QuickBar>
        <QuickMore aria-label="自定义"><Caret /></QuickMore>
        <DocTitle>MUJUTAIJIA-1600MM (活动的) - Creo Parametric 6.0</DocTitle>
      </TitleBar>
      <TabBar>
        <Tab $kind="file">文件</Tab>
        <Tab $kind="active">主页</Tab>
        {['精细模型', '检查', '工具', '视图', '柔性建模'].map((t) => <Tab key={t}>{t}</Tab>)}
      </TabBar>
      <Ribbon>
        <RibbonGroup label="设置" caret>
          <BigButton w={56} on icon={<IcStructure />} label="结构模式" />
          <BigButton w={44} icon={<IcThermal />} label="热模式" />
          <BigButton w={56} icon={<IcModelSetup />} label="模型设置" />
        </RibbonGroup>
        <RibbonGroup label="操作" caret wide>
          <BigButton w={56} icon={<IcRegen />} label="重新生成" caret />
          <Cols><div><SmallButton off icon={<IcCopy />} label="复制" /><SmallButton off icon={<IcPaste />} label="粘贴" /></div></Cols>
        </RibbonGroup>
        <RibbonGroup label="载荷" caret wide>
          <BigButton w={49} icon={<IcForce />} label="力/力矩" />
          <Cols>
            <div><SmallButton icon={<IcPressure />} label="压力" /><SmallButton icon={<IcBearing />} label="承载" /><SmallButton icon={<IcTemperature />} label="温度" /></div>
            <div><SmallButton icon={<IcGravity />} label="重力" /><SmallButton icon={<IcCentrifugal />} label="离心" /><SmallButton icon={<IcPreload />} label="预加载荷" /></div>
          </Cols>
        </RibbonGroup>
        <RibbonGroup label="约束" caret wide>
          <BigButton w={40} icon={<IcDisplacement />} label="位移" />
          <Cols><div><SmallButton icon={<IcPlane />} label="平面" /><SmallButton icon={<IcPin />} label="销" /><SmallButton icon={<IcBall />} label="球" /></div></Cols>
        </RibbonGroup>
        <RibbonGroup label="材料" wide>
          <Cols><div><SmallButton icon={<IcMaterial />} label="材料" /><SmallButton icon={<IcAssign />} label="材料分配" /><SmallButton icon={<IcOrient />} label="材料方向" /></div></Cols>
        </RibbonGroup>
        <RibbonGroup label="运行" wide>
          <BigButton w={56} icon={<IcAnalysis />} label="分析和研究" />
          <Cols><div><SmallButton icon={<IcMeasure />} label="测量" /><SmallButton icon={<IcResults />} label="结果" /><SmallButton off icon={<IcDiagnose />} label="诊断" /></div></Cols>
        </RibbonGroup>
        <RibbonGroup label="关闭">
          <BigButton w={46} icon={<IcClose />} label="关闭" />
        </RibbonGroup>
      </Ribbon>
      <Main>
        <TreePanel />
        <Canvas>
          <FrameModel />
          <ViewBar>
            {VIEW_TOOLS.map((t) => <ViewButton key={t.name} aria-label={t.name} $on={t.on} $more={t.more}><Icon w={16}>{t.art}</Icon></ViewButton>)}
          </ViewBar>
          <Note>上平面垂直向下18吨的力</Note>
          <Status>结构 : 3D : 固有模式 : 默认 连接界面</Status>
          <Watermark>
            <Icon w={56} h={62}>
              <ellipse cx="26" cy="43" rx="16" ry="8" transform="rotate(-20 26 43)" stroke="#d3dadf" strokeWidth="2.500" />
              <ellipse cx="23" cy="21" rx="23" ry="13" transform="rotate(42 23 21)" stroke="#a9bcc9" strokeWidth="3" />
              <path d="M44 23C54 18 59 26 56 36C52 50 42 58 34 56C29 54 30 46 34 40" stroke="#e8a3aa" strokeWidth="4" strokeLinecap="round" />
            </Icon>
            <MarkText><MarkName>野火论坛</MarkName>www.proewildfire.cn</MarkText>
          </Watermark>
        </Canvas>
      </Main>
      <Footer />
    </Shell>
  );
}
